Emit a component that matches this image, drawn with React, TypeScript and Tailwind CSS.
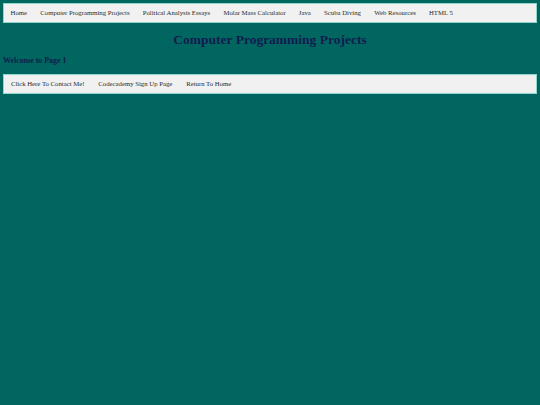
export default function App() {
  const top = ["Home", "Computer Programming Projects", "Political Analysis Essays", "Molar Mass Calculator", "Java", "Scuba Diving", "Web Resources", "HTML 5"];
  const bottom = ["Click Here To Contact Me!", "Codecademy Sign Up Page", "Return To Home"];
  return (
    <div className="min-h-[405px] bg-[#026660] font-['Liberation_Serif',serif] px-[3px] pt-[3px]">
      <ul className="flex h-[20px] items-center border border-[#8fd6cd] bg-[#f1f1f1]">
        {top.map((t) => (
          <li key={t} className="px-[6.6px] text-[6.75px] leading-none text-[#2b2b2b]">{t}</li>
        ))}
      </ul>
      <h1 className="mt-[9px] text-center text-[13.5px] font-bold leading-[16px] text-[#101c4f]">Computer Programming Projects</h1>
      <h3 className="mt-[8px] text-[7.9px] font-bold leading-[10px] text-[#101c4f]">Welcome to Page 1</h3>
      <ul className="mt-[8px] flex h-[20px] items-center border border-[#8fd6cd] bg-[#f1f1f1]">
        {bottom.map((t) => (
          <li key={t} className="px-[6.9px] text-[6.75px] leading-none text-[#2b2b2b]">{t}</li>
        ))}
      </ul>
    </div>
  );
}
